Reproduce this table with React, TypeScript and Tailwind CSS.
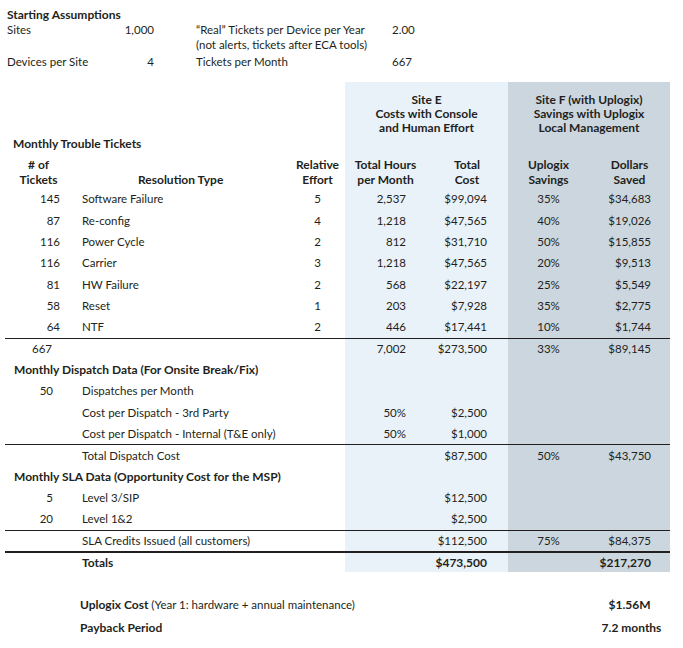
import React from "react";

const BLUE = "bg-[#e9f1f9]";
const GRAY = "bg-[#cbd6df]";
const GRID = "grid grid-cols-[77px_208px_55px_81px_82px_81px_81px]";

type RowProps = {
  a?: React.ReactNode;
  aPr?: string;
  b?: React.ReactNode;
  c?: React.ReactNode;
  d?: React.ReactNode;
  e?: React.ReactNode;
  f?: React.ReactNode;
  g?: React.ReactNode;
  span?: React.ReactNode;
  border?: string;
  bold?: boolean;
};

function Row({ a, aPr, b, c, d, e, f, g, span, border, bold }: RowProps) {
  return (
    <div className={`${GRID} h-[21.33px] ${border ?? ""} ${bold ? "font-bold text-[12px]" : ""}`}>
      {span !== undefined ? (
        <div className="col-span-3 flex items-center pl-[9px] font-bold text-[12px] whitespace-nowrap">{span}</div>
      ) : (
        <>
          <div className={`flex items-center justify-end ${aPr ?? "pr-[22px]"}`}>{a}</div>
          <div className="flex items-center whitespace-nowrap">{b}</div>
          <div className="flex items-center justify-center">{c}</div>
        </>
      )}
      <div className={`${BLUE} flex items-center justify-end pr-[20px]`}>{d}</div>
      <div className={`${BLUE} flex items-center justify-end pr-[21px]`}>{e}</div>
      <div className={`${GRAY} flex items-center justify-center`}>{f}</div>
      <div className={`${GRAY} flex items-center justify-end pr-[19px]`}>{g}</div>
    </div>
  );
}

const tickets = [
  ["145", "Software Failure", "5", "2,537", "$99,094", "35%", "$34,683"],
  ["87", "Re-config", "4", "1,218", "$47,565", "40%", "$19,026"],
  ["116", "Power Cycle", "2", "812", "$31,710", "50%", "$15,855"],
  ["116", "Carrier", "3", "1,218", "$47,565", "20%", "$9,513"],
  ["81", "HW Failure", "2", "568", "$22,197", "25%", "$5,549"],
  ["58", "Reset", "1", "203", "$7,928", "35%", "$2,775"],
  ["64", "NTF", "2", "446", "$17,441", "10%", "$1,744"],
];

export default function App() {
  return (
    <div
      className="w-[683px] h-[648px] bg-white text-[#231f20] text-[11.5px] leading-[15px] overflow-hidden"
      style={{ fontFamily: "Lato, 'Open Sans', sans-serif" }}
    >
      {/* Starting assumptions */}
      <div className="pt-[7px] pl-[7px]">
        <div className="font-bold text-[12px]">Starting Assumptions</div>
        <div className="flex">
          <div className="w-[147px] flex justify-between">
            <span>Sites</span>
            <span>1,000</span>
          </div>
          <div className="ml-[42px] w-[196px]">
            <div>“Real” Tickets per Device per Year</div>
            <div>(not alerts, tickets after ECA tools)</div>
          </div>
          <div>2.00</div>
        </div>
        <div className="flex mt-[2px]">
          <div className="w-[147px] flex justify-between">
            <span>Devices per Site</span>
            <span>4</span>
          </div>
          <div className="ml-[42px] w-[196px]">Tickets per Month</div>
          <div>667</div>
        </div>
      </div>

      {/* Table */}
      <div className="mt-[13px] ml-[5px] w-[665px]">
        {/* Header 1 */}
        <div className={`${GRID} h-[54px] font-bold text-[12px]`}>
          <div className="col-span-3" />
          <div className={`${BLUE} col-span-2 pt-[11px] text-center leading-[14px]`}>
            <div>Site E</div>
            <div>Costs with Console</div>
            <div>and Human Effort</div>
          </div>
          <div className={`${GRAY} col-span-2 pt-[11px] text-center leading-[14px]`}>
            <div>Site F (with Uplogix)</div>
            <div>Savings with Uplogix</div>
            <div>Local Management</div>
          </div>
        </div>
        {/* Header 2 */}
        <div className={`${GRID} h-[15px] font-bold text-[12px]`}>
          <div className="col-span-3 pl-[8px] whitespace-nowrap">Monthly Trouble Tickets</div>
          <div className={`${BLUE} col-span-2`} />
          <div className={`${GRAY} col-span-2`} />
        </div>
        {/* Header 3 */}
        <div className={`${GRID} h-[37.33px] font-bold text-[12px] pt-[6px]`}>
          <div className="text-center pr-[10px]">
            <div># of</div>
            <div>Tickets</div>
          </div>
          <div className="pl-[56px] pt-[15px]">Resolution Type</div>
          <div className="text-center">
            <div>Relative</div>
            <div>Effort</div>
          </div>
          <div className={`${BLUE} text-center -mt-[6px] pt-[6px]`}>
            <div>Total Hours</div>
            <div>per Month</div>
          </div>
          <div className={`${BLUE} text-center -mt-[6px] pt-[6px]`}>
            <div>Total</div>
            <div>Cost</div>
          </div>
          <div className={`${GRAY} text-center -mt-[6px] pt-[6px]`}>
            <div>Uplogix</div>
            <div>Savings</div>
          </div>
          <div className={`${GRAY} text-center -mt-[6px] pt-[6px]`}>
            <div>Dollars</div>
            <div>Saved</div>
          </div>
        </div>

        {tickets.map((t, i) => (
          <Row key={i} a={t[0]} b={t[1]} c={t[2]} d={t[3]} e={t[4]} f={t[5]} g={t[6]} />
        ))}
        <Row border="border-t border-[#231f20]" a="667" aPr="pr-[30px]" d="7,002" e="$273,500" f="33%" g="$89,145" />
        <Row span="Monthly Dispatch Data (For Onsite Break/Fix)" />
        <Row a="50" aPr="pr-[29px]" b="Dispatches per Month" />
        <Row b="Cost per Dispatch - 3rd Party" d="50%" e="$2,500" />
        <Row b="Cost per Dispatch - Internal (T&E only)" d="50%" e="$1,000" />
        <Row border="border-t border-[#231f20]" b="Total Dispatch Cost" e="$87,500" f="50%" g="$43,750" />
        <Row span="Monthly SLA Data (Opportunity Cost for the MSP)" />
        <Row a="5" aPr="pr-[29px]" b="Level 3/SIP" e="$12,500" />
        <Row a="20" aPr="pr-[29px]" b="Level 1&2" e="$2,500" />
        <Row border="border-t border-[#231f20]" b="SLA Credits Issued (all customers)" e="$112,500" f="75%" g="$84,375" />
        <Row border="border-t-2 border-[#231f20]" bold b="Totals" e="$473,500" g="$217,270" />
      </div>

      {/* Bottom */}
      <div className="mt-[21px] ml-[80px]">
        <div className="flex h-[23px] items-center">
          <div className="w-[509px]">
            <span className="font-bold text-[12px]">Uplogix Cost</span> (Year 1: hardware + annual maintenance)
          </div>
          <div className="w-[81px] text-center font-bold text-[12px]">$1.56M</div>
        </div>
        <div className="flex h-[23px] items-center">
          <div className="w-[509px] font-bold text-[12px]">Payback Period</div>
          <div className="w-[81px] text-center font-bold text-[12px] pl-[4px] whitespace-nowrap">7.2 months</div>
        </div>
      </div>
    </div>
  );
}
